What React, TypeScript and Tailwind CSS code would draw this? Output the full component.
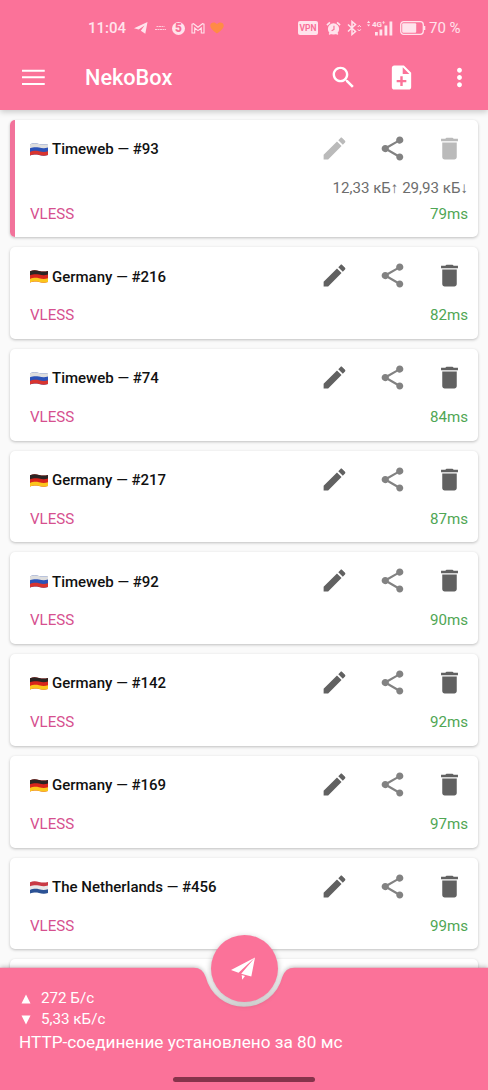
import clsx from 'clsx'

type Country = 'ru' | 'de' | 'nl'

interface Profile {
  country: Country
  name: string
  ping: string
  traffic?: string
  selected?: boolean
}

const PROFILES: Profile[] = [
  {
    country: 'ru',
    name: 'Timeweb — #93',
    ping: '79ms',
    traffic: '12,33 кБ↑ 29,93 кБ↓',
    selected: true,
  },
  { country: 'de', name: 'Germany — #216', ping: '82ms' },
  { country: 'ru', name: 'Timeweb — #74', ping: '84ms' },
  { country: 'de', name: 'Germany — #217', ping: '87ms' },
  { country: 'ru', name: 'Timeweb — #92', ping: '90ms' },
  { country: 'de', name: 'Germany — #142', ping: '92ms' },
  { country: 'de', name: 'Germany — #169', ping: '97ms' },
  { country: 'nl', name: 'The Netherlands — #456', ping: '99ms' },
]

const FLAG_COLORS: Record<Country, string[]> = {
  ru: ['#dedede', '#2b52b8', '#d8342f'],
  de: ['#2b2423', '#d8251c', '#fbc51c'],
  nl: ['#c93a45', '#e9e9e9', '#2b5295'],
}

const ICON_PATHS = {
  menu: 'M2.500 18.200h18.800v-1.700H2.500zM2.500 12.700h18.800V11H2.500zM2.500 5.500v1.700h18.800V5.500z',
  search:
    'M15.5 14h-.79l-.28-.27C15.41 12.59 16 11.11 16 9.5 16 5.91 13.09 3 9.5 3S3 5.91 3 9.5 5.91 16 9.5 16c1.61 0 3.09-.59 4.23-1.57l.27.28v.79l5 4.99L20.49 19l-4.99-5zm-6 0C7.01 14 5 11.99 5 9.5S7.01 5 9.5 5 14 7.01 14 9.5 11.99 14 9.5 14z',
  noteAdd:
    'M14 2H6c-1.1 0-1.99.9-1.99 2L4 20c0 1.1.89 2 1.99 2H18c1.1 0 2-.9 2-2V8l-6-6zm2 14h-3v3h-2v-3H8v-2h3v-3h2v3h3v2zm-3-7V3.5L18.5 9H13z',
  more: 'M12 8c1.1 0 2-.9 2-2s-.9-2-2-2-2 .9-2 2 .9 2 2 2zm0 2c-1.1 0-2 .9-2 2s.9 2 2 2 2-.9 2-2-.9-2-2-2zm0 6c-1.1 0-2 .9-2 2s.9 2 2 2 2-.9 2-2-.9-2-2-2z',
  edit: 'M3 17.25V21h3.75L17.81 9.94l-3.75-3.75L3 17.25zM20.71 7.04c.39-.39.39-1.02 0-1.41l-2.34-2.34c-.39-.39-1.02-.39-1.41 0l-1.83 1.83 3.75 3.75 1.83-1.83z',
  share:
    'M18 16.08c-.76 0-1.44.3-1.96.77L8.91 12.7c.05-.23.09-.46.09-.7s-.04-.47-.09-.7l7.05-4.11c.54.5 1.25.81 2.04.81 1.66 0 3-1.34 3-3s-1.34-3-3-3-3 1.34-3 3c0 .24.04.47.09.7L8.04 9.81C7.5 9.31 6.79 9 6 9c-1.66 0-3 1.34-3 3s1.34 3 3 3c.79 0 1.5-.31 2.04-.81l7.12 4.16c-.05.21-.08.43-.08.65 0 1.61 1.31 2.92 2.92 2.92s2.92-1.31 2.92-2.92-1.31-2.92-2.92-2.92z',
  delete:
    'M6 19c0 1.1.9 2 2 2h8c1.1 0 2-.9 2-2V7H6v12zM19 4h-3.5l-1-1h-5l-1 1H5v2h14V4z',
}

interface IconProps {
  name: keyof typeof ICON_PATHS
  className?: string
}

function Icon({ name, className }: IconProps) {
  return (
    <svg
      viewBox="0 0 24 24"
      fill="currentColor"
      className={clsx('size-[29px] shrink-0', className)}
    >
      <path d={ICON_PATHS[name]} />
    </svg>
  )
}

function Flag({ country }: { country: Country }) {
  const [top, middle, bottom] = FLAG_COLORS[country]

  return (
    <svg viewBox="0 0 18 13" className="mt-[2px] h-[13px] w-[18px] shrink-0">
      <path d="M0 1.200C3.500-.2 6 .2 9 .9s5.500 1.100 9 0V12c-3.500 1.100-6 .7-9 0s-5.500-.7-9 .6z" fill={middle} />
      <path d="M0 1.200C3.500-.2 6 .2 9 .9s5.500 1.100 9 0V4.600c-3.500 1.100-6 .7-9 0s-5.500-.7-9 .6z" fill={top} />
      <path d="M0 8.900c3.500-1.300 6-1.300 9-.6s5.500 1.100 9 0V12c-3.500 1.100-6 .7-9 0s-5.500-.7-9 .6z" fill={bottom} />
    </svg>
  )
}

function StatusBar() {
  return (
    <div className="flex h-[54px] items-center pt-[2px] pl-[88px] text-[#ffe3ec]">
      <span className="w-[37px] text-[15px] font-medium">11:04</span>

      <svg viewBox="0 0 14 12" className="ml-[9px] h-3 w-[14px]" fill="currentColor">
        <path d="M0 6.200 13.500 0 11.300 11.800 6.800 8.800 10.500 3.500 4.700 7.500z" />
      </svg>
      <svg viewBox="0 0 11 6" className="ml-[7px] h-[6px] w-[11px]" stroke="currentColor" fill="none">
        <path d="M1.500 1.500h8" strokeDasharray="2 .5" opacity=".8" />
        <path d="M0 4.500h11" strokeDasharray="2 .5" opacity=".8" />
      </svg>
      <span className="ml-[6px] flex size-[13px] items-center justify-center rounded-full bg-[#ffe3ec] text-[12px] font-black text-[#f96f97]">
        5
      </span>
      <svg viewBox="0 0 14 11" className="ml-[6px] h-[11px] w-[14px]" fill="none" stroke="currentColor" strokeWidth="1.1">
        <path d="M1 1.200 2.500.7 7 4.300 11.500.7 13 1.200V10h-2.700V5L7 7.600 3.700 5v5H1z" />
      </svg>
      <svg viewBox="0 0 14 12" className="ml-[5px] h-3 w-[14px]" fill="#ff8b45">
        <path d="M7 11.600C3 8.500.3 6.500.3 3.500.3.500 4.800-.8 7 2.200c2.200-3 6.700-1.700 6.700 1.300 0 3-2.700 5-6.700 8.100z" />
      </svg>

      <span className="ml-[74px] flex h-[14px] w-[20px] items-center justify-center rounded-[2px] bg-[#ffe3ec] text-[8.5px] font-bold text-[#f96f97]">
        VPN
      </span>
      <svg viewBox="0 0 16 16" className="ml-[8px] size-[15px]">
        <circle cx="8" cy="8.500" r="6" fill="currentColor" />
        <path d="M1 4.500 4.200 1.500M15 4.500 11.800 1.500M3.500 14.500l1.500-2M12.500 14.500l-1.500-2" stroke="currentColor" strokeWidth="1.800" />
        <path d="M8.500 5v4L6 10.500" fill="none" stroke="#f96f97" strokeWidth="1.200" />
      </svg>
      <svg viewBox="0 0 15 16" className="ml-[6px] h-[16px] w-[15px]" fill="none" stroke="currentColor" strokeWidth="1.500">
        <path d="M1 4.500 8.500 11.500 5 14.500V1.500L8.500 4.500 1 11.500" />
        <path d="m10.800 7 1.500-1.700L13.800 7M10.800 9.300l1.500 1.700 1.500-1.700" strokeWidth="1" />
      </svg>
      <svg viewBox="0 0 26 16" className="ml-[5px] h-[16px] w-[26px]" fill="currentColor">
        <path d="M0 3 1.600.8 3.200 3zM0 4.500h3.200L1.600 6.500z" />
        <text x="5" y="6.800" fontSize="8" fontWeight="700">
          4G⁺
        </text>
        <path d="M8 12h2.800v3.500H8zM12.500 9.500h2.800v6h-2.800zM17.500 5.500h2.800v10h-2.800zM22.500 1.500h2.800v14h-2.800z" />
      </svg>
      <svg viewBox="0 0 26 14" className="ml-[7px] h-[14px] w-[26px]">
        <rect x=".7" y=".7" width="22.600" height="12.600" rx="3" fill="none" stroke="currentColor" strokeWidth="1.300" />
        <rect x="2.200" y="2.200" width="14" height="9.600" rx="1" fill="currentColor" />
        <path d="M24.500 5v4" stroke="currentColor" strokeWidth="1.600" />
      </svg>
      <span className="ml-[3px] text-[15px] whitespace-nowrap">70 %</span>
    </div>
  )
}

function AppBar() {
  return (
    <header className="z-10 h-[110px] shrink-0 bg-[#fb7299] text-white shadow-[0_2px_6px_rgba(0,0,0,0.2)]">
      <StatusBar />
      <div className="flex h-[46px] items-center pl-[19px]">
        <Icon name="menu" />
        <h1 className="mt-[2px] ml-[37px] text-[21.700px] font-medium">NekoBox</h1>
        <div className="ml-auto flex gap-[29px] pr-[14px]">
          <Icon name="search" />
          <Icon name="noteAdd" />
          <Icon name="more" />
        </div>
      </div>
    </header>
  )
}

function ProfileCard({ country, name, ping, traffic, selected }: Profile) {
  return (
    <li
      className={clsx(
        'flex shrink-0 overflow-hidden rounded-[5px] bg-white shadow-[0_1px_3px_rgba(0,0,0,0.24)]',
        selected ? 'h-[117.400px]' : 'h-[91.700px]',
      )}
    >
      <div className={clsx('w-[5px] shrink-0', selected && 'bg-[#f2739b]')} />
      <div className="flex-1 pr-[10px] pl-[15px]">
        <div className="flex h-[57px] items-center">
          <Flag country={country} />
          <span className="mt-[2px] ml-[4px] text-[15px] font-medium whitespace-nowrap text-[#111111]">
            {name}
          </span>
          <div className="ml-auto flex gap-[28.500px] pr-[4px]">
            <Icon name="edit" className={selected ? 'text-[#bababa]' : 'text-[#616161]'} />
            <Icon name="share" className="text-[#828282]" />
            <Icon name="delete" className={selected ? 'text-[#bababa]' : 'text-[#616161]'} />
          </div>
        </div>
        {traffic && (
          <p className="h-[25.700px] text-right text-[15.100px] leading-[23px] text-[#6d6d6d]">
            {traffic}
          </p>
        )}
        <div className="flex justify-between text-[15.100px] leading-[23px]">
          <span className="text-[#d6508f]">VLESS</span>
          <span className="text-[#4fa654]">{ping}</span>
        </div>
      </div>
    </li>
  )
}

function BottomBar() {
  return (
    <footer className="absolute inset-x-0 bottom-0 h-[123px] text-white">
      {/* bar surface with the cradle cut out for the button */}
      <svg
        viewBox="0 0 488 123"
        className="absolute inset-0 h-full w-full overflow-visible drop-shadow-[0_-1px_2px_rgba(0,0,0,0.25)]"
      >
        <path
          d="M0 .7H194Q202.500 .7 205.700 10A39.500 39.500 0 0 0 282.300 10Q285.500 .7 294 .7H488V123H0z"
          fill="#fb7299"
        />
      </svg>
      <button className="absolute top-[-32.500px] left-[210.500px] flex size-[67px] items-center justify-center rounded-full bg-[#fb7299] shadow-[0_2px_6px_rgba(0,0,0,0.28)]">
        <svg viewBox="0 0 26 25" className="h-[25px] w-[26px]" fill="currentColor">
          <path d="M24 1.500 0 14 7.500 16.800zM24 1.500 10.200 17.800 20.300 20.600zM10.700 19 14 20 11.200 23.800z" />
        </svg>
      </button>
      <div className="relative flex h-full flex-col pt-[21px] pl-[19px]">
        <p className="flex h-[21px] items-center text-[15.200px]">
          <svg viewBox="0 0 10 10" className="ml-[2px] size-[10px]" fill="currentColor">
            <path d="M5 .5 9.500 9.500H.5z" />
          </svg>
          <span className="ml-[10px]">272 Б/с</span>
        </p>
        <p className="flex h-[21px] items-center text-[15.200px]">
          <svg viewBox="0 0 10 10" className="ml-[2px] size-[10px]" fill="currentColor">
            <path d="M5 9.500 9.500.5H.5z" />
          </svg>
          <span className="ml-[10px]">5,33 кБ/с</span>
        </p>
        <p className="text-[17.200px] leading-[24px]">
          HTTP-соединение установлено за 80 мс
        </p>
        <div className="mt-auto mb-[8px] ml-[154px] h-[5px] w-[142px] rounded-full bg-[#86334b]" />
      </div>
    </footer>
  )
}

export default function App() {
  return (
    <div className="relative flex h-[1090px] w-[488px] flex-col overflow-hidden bg-[#fafafa] font-[Roboto,sans-serif]">
      <AppBar />
      <ul className="flex min-h-0 flex-1 flex-col gap-[10px] px-[10px] pt-[10px]">
        {PROFILES.map((profile) => (
          <ProfileCard key={profile.name} {...profile} />
        ))}
        <li className="h-[91.700px] shrink-0 rounded-[5px] bg-white shadow-[0_1px_3px_rgba(0,0,0,0.24)]" />
      </ul>
      <BottomBar />
    </div>
  )
}
